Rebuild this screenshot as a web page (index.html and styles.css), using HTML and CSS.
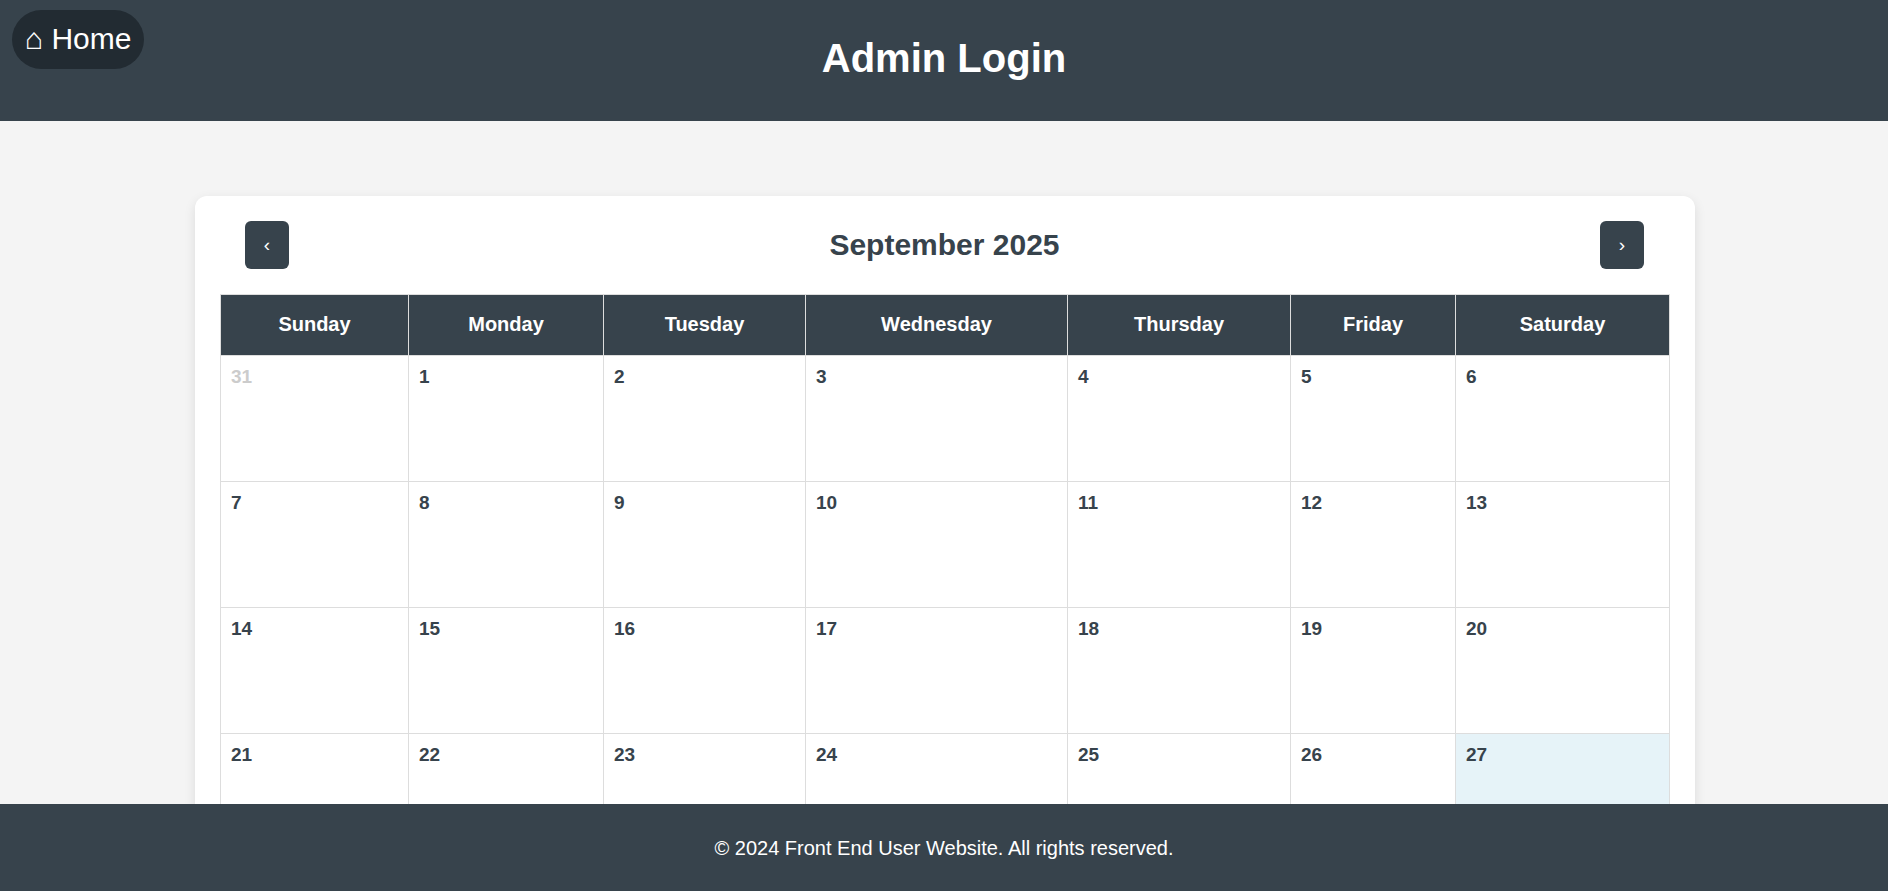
FILE: index.html
```html
<!DOCTYPE html>
<html lang="en">
<head>
<meta charset="utf-8">
<title>Admin Login</title>
<link rel="stylesheet" href="styles.css">
</head>
<body>
<header class="site-header">
  <a class="home-link" href="#">⌂ Home</a>
  <h1 class="site-title">Admin Login</h1>
</header>
<main class="content">
  <section class="calendar">
    <div class="cal-nav">
      <button class="nav-btn" type="button">‹</button>
      <h2 class="cal-title">September 2025</h2>
      <button class="nav-btn" type="button">›</button>
    </div>
    <table class="cal-table">
      <colgroup>
        <col class="col-sun"><col class="col-mon"><col class="col-tue"><col class="col-wed"><col class="col-thu"><col class="col-fri"><col class="col-sat">
      </colgroup>
      <thead>
        <tr><th>Sunday</th><th>Monday</th><th>Tuesday</th><th>Wednesday</th><th>Thursday</th><th>Friday</th><th>Saturday</th></tr>
      </thead>
      <tbody>
        <tr><td class="muted">31</td><td>1</td><td>2</td><td>3</td><td>4</td><td>5</td><td>6</td></tr>
        <tr><td>7</td><td>8</td><td>9</td><td>10</td><td>11</td><td>12</td><td>13</td></tr>
        <tr><td>14</td><td>15</td><td>16</td><td>17</td><td>18</td><td>19</td><td>20</td></tr>
        <tr><td>21</td><td>22</td><td>23</td><td>24</td><td>25</td><td>26</td><td class="today">27</td></tr>
        <tr><td>28</td><td>29</td><td>30</td><td class="muted">1</td><td class="muted">2</td><td class="muted">3</td><td class="muted">4</td></tr>
      </tbody>
    </table>
  </section>
</main>
<footer class="site-footer">© 2024 Front End User Website. All rights reserved.</footer>
</body>
</html>
```
FILE: styles.css
```css
* { box-sizing: border-box; }
html, body { height: 100%; overflow: hidden; }
body {
  margin: 0;
  background: #f4f4f4;
  color: #333;
  font-family: "Liberation Sans", Arial, sans-serif;
}
.site-header {
  position: relative;
  height: 121px;
  padding-top: 33px;
  background: #37434c;
  color: #fff;
  text-align: center;
}
.site-title {
  margin: 0;
  font-size: 40px;
  line-height: 50px;
  font-weight: 700;
}
.home-link {
  position: absolute;
  left: 12px;
  top: 10px;
  height: 59px;
  padding: 0 13px 2px;
  display: flex;
  align-items: center;
  border-radius: 30px;
  background: #222b32;
  color: #fff;
  font-size: 30px;
  text-decoration: none;
}
.content { padding: 75px 0 0 2px; }
.calendar {
  width: 1500px;
  margin: 0 auto;
  padding: 25px;
  background: #fff;
  border-radius: 12px;
  box-shadow: 0 4px 12px rgba(0, 0, 0, 0.1);
}
.cal-nav {
  display: flex;
  align-items: center;
  justify-content: space-between;
  padding: 0 26px 0 25px;
  margin-bottom: 25px;
}
.nav-btn {
  width: 44px;
  height: 48px;
  padding: 0;
  border: 0;
  border-radius: 6px;
  background: #37434c;
  color: #fff;
  font-family: inherit;
  font-size: 19px;
}
.cal-title {
  margin: 0;
  font-size: 30px;
  font-weight: 700;
  color: #37434c;
}
.cal-table {
  width: 1449px;
  table-layout: fixed;
  border-collapse: collapse;
}
.col-sun { width: 188px; }
.col-mon { width: 195px; }
.col-tue { width: 202px; }
.col-wed { width: 262px; }
.col-thu { width: 223px; }
.col-fri { width: 165px; }
.col-sat { width: 214px; }
.cal-table th {
  height: 61px;
  padding: 0 0 2px;
  background: #37434c;
  color: #fff;
  border: 1px solid #ddd;
  font-size: 20px;
  font-weight: 700;
}
.cal-table td {
  height: 126px;
  padding: 10px;
  vertical-align: top;
  border: 1px solid #ddd;
  font-size: 19px;
  font-weight: 700;
  color: #37434c;
}
.cal-table td.muted { color: #ccc; }
.cal-table td.today { background: #e6f3f8; }
.site-footer {
  position: fixed;
  left: 0;
  right: 0;
  bottom: 0;
  height: 87px;
  padding-top: 1px;
  display: flex;
  align-items: center;
  justify-content: center;
  background: #37434c;
  color: #fff;
  font-size: 20px;
}
```
